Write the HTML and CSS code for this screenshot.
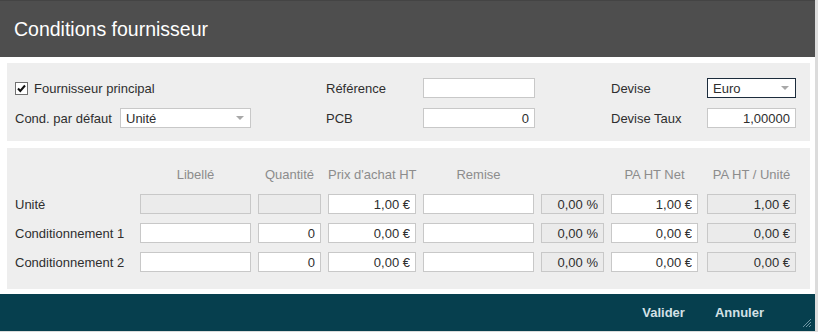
FILE: index.html
```html
<!DOCTYPE html>
<html lang="fr">
<head>
<meta charset="utf-8">
<title>Conditions fournisseur</title>
<link rel="stylesheet" href="styles.css">
</head>
<body>
<div class="dialog">
  <div class="dlg-header">Conditions fournisseur</div>
  <div class="dlg-body">
    <div class="panel panel-top">
      <label class="check-row">
        <span class="checkbox"><svg width="11" height="11" viewBox="0 0 11 11"><path d="M2 5.5 L4.3 8 L9 2.5" fill="none" stroke="#111" stroke-width="2"/></svg></span>
        <span>Fournisseur principal</span>
      </label>
      <span class="lbl c3">Référence</span>
      <input class="fld w112" type="text" value="">
      <span class="lbl c5">Devise</span>
      <div class="select focus w89"><span>Euro</span><i class="arrow"></i></div>

      <span class="lbl c1">Cond. par défaut</span>
      <div class="select w131"><span>Unité</span><i class="arrow"></i></div>
      <span class="lbl c3">PCB</span>
      <input class="fld num w112" type="text" value="0">
      <span class="lbl c5">Devise Taux</span>
      <input class="fld num w89" type="text" value="1,00000">
    </div>

    <div class="panel panel-grid">
      <span></span>
      <span class="hd">Libellé</span>
      <span class="hd">Quantité</span>
      <span class="hd">Prix d'achat HT</span>
      <span class="hd">Remise</span>
      <span></span>
      <span class="hd">PA HT Net</span>
      <span class="hd hd-last">PA HT / Unité</span>

      <span class="lbl">Unité</span>
      <input class="fld dis" type="text" value="" disabled>
      <input class="fld dis" type="text" value="" disabled>
      <input class="fld num" type="text" value="1,00 €">
      <input class="fld" type="text" value="">
      <input class="fld num dis" type="text" value="0,00 %" disabled>
      <input class="fld num" type="text" value="1,00 €">
      <input class="fld num dis last" type="text" value="1,00 €" disabled>

      <span class="lbl">Conditionnement 1</span>
      <input class="fld" type="text" value="">
      <input class="fld num" type="text" value="0">
      <input class="fld num" type="text" value="0,00 €">
      <input class="fld" type="text" value="">
      <input class="fld num dis" type="text" value="0,00 %" disabled>
      <input class="fld num" type="text" value="0,00 €">
      <input class="fld num dis last" type="text" value="0,00 €" disabled>

      <span class="lbl">Conditionnement 2</span>
      <input class="fld" type="text" value="">
      <input class="fld num" type="text" value="0">
      <input class="fld num" type="text" value="0,00 €">
      <input class="fld" type="text" value="">
      <input class="fld num dis" type="text" value="0,00 %" disabled>
      <input class="fld num" type="text" value="0,00 €">
      <input class="fld num dis last" type="text" value="0,00 €" disabled>
    </div>
  </div>
  <div class="dlg-footer">
    <button class="btn">Valider</button>
    <button class="btn">Annuler</button>
    <svg class="grip" width="10" height="10" viewBox="0 0 10 10"><path d="M9 1 L1 9 M9 4 L4 9 M9 7 L7 9" stroke="#6f96a3" stroke-width="1"/></svg>
  </div>
</div>
</body>
</html>
```

FILE: styles.css
```css
html, body {
  margin: 0;
  padding: 0;
  background: #dcdcdc;
}
body {
  font-family: "Liberation Sans", Arial, sans-serif;
  font-size: 13px;
  color: #2e2e2e;
  width: 818px;
  height: 332px;
  overflow: hidden;
}
.dialog {
  width: 815px;
  height: 331px;
  background: #ffffff;
  display: flex;
  flex-direction: column;
}
.dlg-header {
  box-sizing: border-box;
  height: 57px;
  border-top: 1px solid #444;
  background: #4e4e4e;
  color: #ffffff;
  font-size: 19.5px;
  padding-left: 14px;
  padding-top: 1px;
  display: flex;
  align-items: center;
}
.dlg-body {
  flex: 1;
  padding: 6px 5px 5px 7px;
  display: flex;
  flex-direction: column;
  gap: 7px;
}
.panel {
  background: #eeeeee;
}
.panel-top {
  height: 78px;
  box-sizing: border-box;
  padding: 15px 0 0 8px;
  display: grid;
  grid-template-columns: 105px 206px 97px 188px 96px 89px;
  grid-template-rows: 20px 20px;
  row-gap: 10px;
  align-items: center;
}
.check-row {
  grid-column: 1 / 3;
  display: flex;
  align-items: center;
  gap: 6px;
}
.checkbox {
  width: 13px;
  height: 13px;
  box-sizing: border-box;
  border: 1px solid #707070;
  background: #fff;
  display: flex;
  align-items: center;
  justify-content: center;
}
.checkbox svg { display: block; }
.lbl { white-space: nowrap; }
.c1 { grid-column: 1; }
.c3 { grid-column: 3; }
.c5 { grid-column: 5; }
.w112 { width: 112px; }
.w131 { width: 131px; }
.w89 { width: 89px; }
.fld {
  box-sizing: border-box;
  height: 20px;
  margin: 0;
  border: 1px solid #c8c8c8;
  background: #ffffff;
  font-family: "Liberation Sans", Arial, sans-serif;
  font-size: 13px;
  color: #2e2e2e;
  padding: 0 5px;
  outline: none;
}
.fld.num { text-align: right; }
.fld.dis {
  background: #ebebeb;
  border-color: #c8c8c8;
  color: #2e2e2e;
  -webkit-text-fill-color: #2e2e2e;
  opacity: 1;
}
.select {
  box-sizing: border-box;
  height: 20px;
  border: 1px solid #c8c8c8;
  background: #ffffff;
  display: flex;
  align-items: center;
  justify-content: space-between;
  padding: 0 6px 0 5px;
}
.select.focus {
  border-color: #1c2c3c;
}
.arrow {
  width: 0;
  height: 0;
  border-left: 4px solid transparent;
  border-right: 4px solid transparent;
  border-top: 4px solid #a8a8a8;
}
.panel-grid {
  flex: 1;
  box-sizing: border-box;
  padding: 16px 0 0 8px;
  display: grid;
  grid-template-columns: 118px 111px 63px 88px 111px 63px 87px 91px;
  grid-template-rows: 21px 20px 20px 20px;
  column-gap: 7px;
  row-gap: 9px;
  align-items: center;
}
.hd {
  color: #8c8c8c;
  text-align: center;
  white-space: nowrap;
}
.hd-last { padding-left: 2px; }
.fld.last {
  width: 89px;
  justify-self: end;
}
.dlg-footer {
  position: relative;
  height: 37px;
  background: #063f4e;
  display: flex;
  align-items: center;
  justify-content: flex-end;
  gap: 30px;
  padding-right: 51px;
}
.btn {
  background: none;
  border: none;
  padding: 0;
  font-family: "Liberation Sans", Arial, sans-serif;
  font-size: 13px;
  font-weight: bold;
  color: #d3e1e6;
  cursor: pointer;
}
.grip {
  position: absolute;
  right: 3px;
  bottom: 3px;
}
```
